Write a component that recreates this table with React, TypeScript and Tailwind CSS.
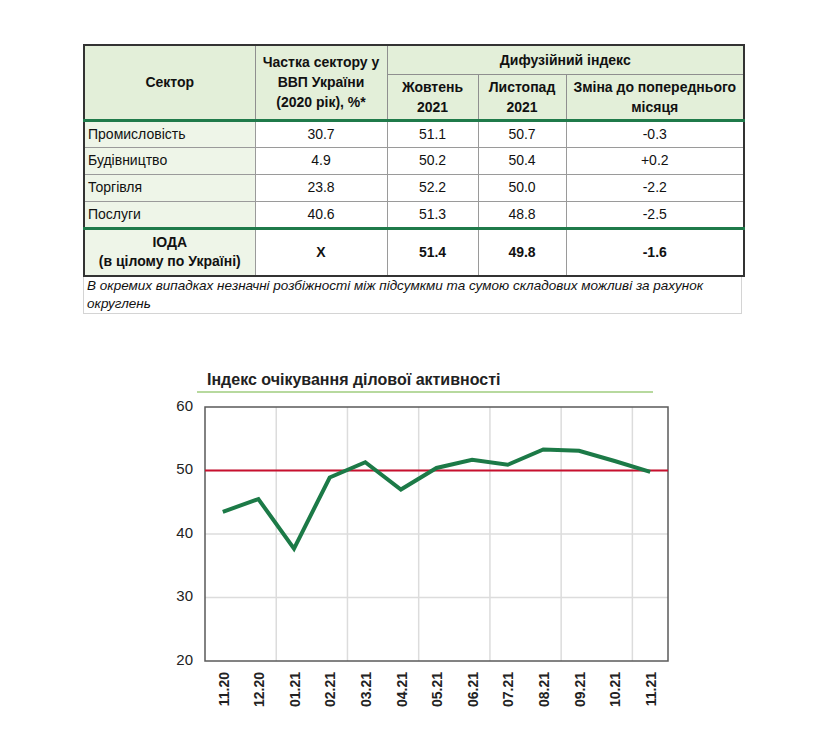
const months = ["11.20", "12.20", "01.21", "02.21", "03.21", "04.21", "05.21", "06.21", "07.21", "08.21", "09.21", "10.21", "11.21"]
const values = [43.5, 45.5, 37.7, 48.9, 51.3, 47.0, 50.4, 51.7, 50.9, 53.3, 53.1, 51.5, 49.8]

const rows = [
  { name: "Промисловість", share: "30.7", oct: "51.1", nov: "50.7", diff: "-0.3" },
  { name: "Будівництво", share: "4.9", oct: "50.2", nov: "50.4", diff: "+0.2" },
  { name: "Торгівля", share: "23.8", oct: "52.2", nov: "50.0", diff: "-2.2" },
  { name: "Послуги", share: "40.6", oct: "51.3", nov: "48.8", diff: "-2.5" },
]

// plot box in page coordinates
const L = 205
const R = 668
const T = 405
const B = 659
const step = (R - L) / months.length
const yOf = (v: number) => B - ((v - 20) / 40) * (B - T)
const xOf = (i: number) => L + step * (i + 0.5)

const Chart = () => {
  const pts = values.map((v, i) => `${xOf(i).toFixed(1)},${yOf(v).toFixed(1)}`).join(" ")
  return (
    <svg width={520} height={330} viewBox="160 395 520 330" className="block ml-[160px] mt-[4px]">
      {[30, 40, 50].map((v) => (
        <line key={v} x1={L} x2={R} y1={yOf(v)} y2={yOf(v)} stroke="#dcdcdc" strokeWidth={1.5} />
      ))}
      {[1, 2, 3, 4, 5, 6].map((k) => (
        <line key={k} x1={L + step * 2 * k} x2={L + step * 2 * k} y1={T} y2={B} stroke="#dcdcdc" strokeWidth={1.5} />
      ))}
      <rect x={L} y={T} width={R - L} height={B - T} fill="none" stroke="#5a5a5a" strokeWidth={1.5} />
      <line x1={L} x2={R} y1={yOf(50)} y2={yOf(50)} stroke="#c8102e" strokeWidth={2} />
      <polyline points={pts} fill="none" stroke="#1c7a47" strokeWidth={4} strokeLinejoin="miter" />
      {[60, 50, 40, 30, 20].map((v) => (
        <text key={v} x={193} y={yOf(v)} textAnchor="end" dominantBaseline="middle" fontSize={15} fill="#222" fontFamily="'Liberation Sans', Arial, sans-serif">
          {v}
        </text>
      ))}
      {months.map((m, i) => (
        <text
          key={m + i}
          x={xOf(i) + 2}
          y={670}
          transform={`rotate(-90 ${xOf(i) + 2} 670)`}
          textAnchor="end"
          dominantBaseline="middle"
          fontSize={14}
          fontWeight="bold"
          fill="#222"
          fontFamily="'Liberation Sans', Arial, sans-serif"
        >
          {m}
        </text>
      ))}
    </svg>
  )
}

const App = () => {
  const th = "border border-[#8f8f8f] bg-[#e3efd9] font-bold text-center leading-[20px] p-0"
  const td = "border border-[#9a9a9a] text-center p-0 h-[27px]"
  const green = "border-b-[3px] border-b-[#1f7a4a]"
  return (
    <div className="min-h-[753px] bg-white pt-[44px] font-['Liberation_Sans',Arial,sans-serif] text-[#111]">
      <div className="ml-[83px] w-[660px]">
        <table className="table-fixed border-collapse w-[660px] text-[14px] border-2 border-[#333]">
          <colgroup>
            <col className="w-[171px]" />
            <col className="w-[132px]" />
            <col className="w-[91px]" />
            <col className="w-[88px]" />
            <col className="w-[178px]" />
          </colgroup>
          <thead>
            <tr className="h-[29px]">
              <th rowSpan={2} className={`${th} ${green}`}>Сектор</th>
              <th rowSpan={2} className={`${th} ${green}`}>
                Частка сектору у<br />ВВП України<br />(2020 рік), %*
              </th>
              <th colSpan={3} className={th}>Дифузійний індекс</th>
            </tr>
            <tr className="h-[46px]">
              <th className={`${th} ${green} leading-[18px]`}>Жовтень<br />2021</th>
              <th className={`${th} ${green} leading-[18px]`}>Листопад<br />2021</th>
              <th className={`${th} ${green} leading-[18px]`}>Зміна до попереднього<br />місяця</th>
            </tr>
          </thead>
          <tbody>
            {rows.map((r, i) => (
              <tr key={r.name}>
                <td className={`${td} text-left pl-[3px] bg-[#eef5e8] ${i === rows.length - 1 ? green : ""}`}>{r.name}</td>
                <td className={`${td} ${i === rows.length - 1 ? green : ""}`}>{r.share}</td>
                <td className={`${td} ${i === rows.length - 1 ? green : ""}`}>{r.oct}</td>
                <td className={`${td} ${i === rows.length - 1 ? green : ""}`}>{r.nov}</td>
                <td className={`${td} ${i === rows.length - 1 ? green : ""}`}>{r.diff}</td>
              </tr>
            ))}
            <tr className="h-[48px] font-bold">
              <td className="border border-[#9a9a9a] bg-[#eef5e8] text-center leading-[19px]">
                ІОДА<br />(в цілому по Україні)
              </td>
              <td className="border border-[#9a9a9a] text-center">X</td>
              <td className="border border-[#9a9a9a] text-center">51.4</td>
              <td className="border border-[#9a9a9a] text-center">49.8</td>
              <td className="border border-[#9a9a9a] text-center">-1.6</td>
            </tr>
          </tbody>
        </table>
        <div className="h-[37px] w-[659px] border-x border-b border-[#d4d4d4] px-[3px] text-[13.5px] italic leading-[18px] text-[#111]">
          В окремих випадках незначні розбіжності між підсумкми та сумою складових можливі за рахунок округлень
        </div>
      </div>

      <div className="mt-[56px] ml-[197px] w-[456px] border-b-2 border-[#b7d99e] pl-[10px] pb-[1px] text-[16px] font-bold leading-[20px] text-[#222]">
        Індекс очікування ділової активності
      </div>
      <Chart />
    </div>
  )
}

export default App
